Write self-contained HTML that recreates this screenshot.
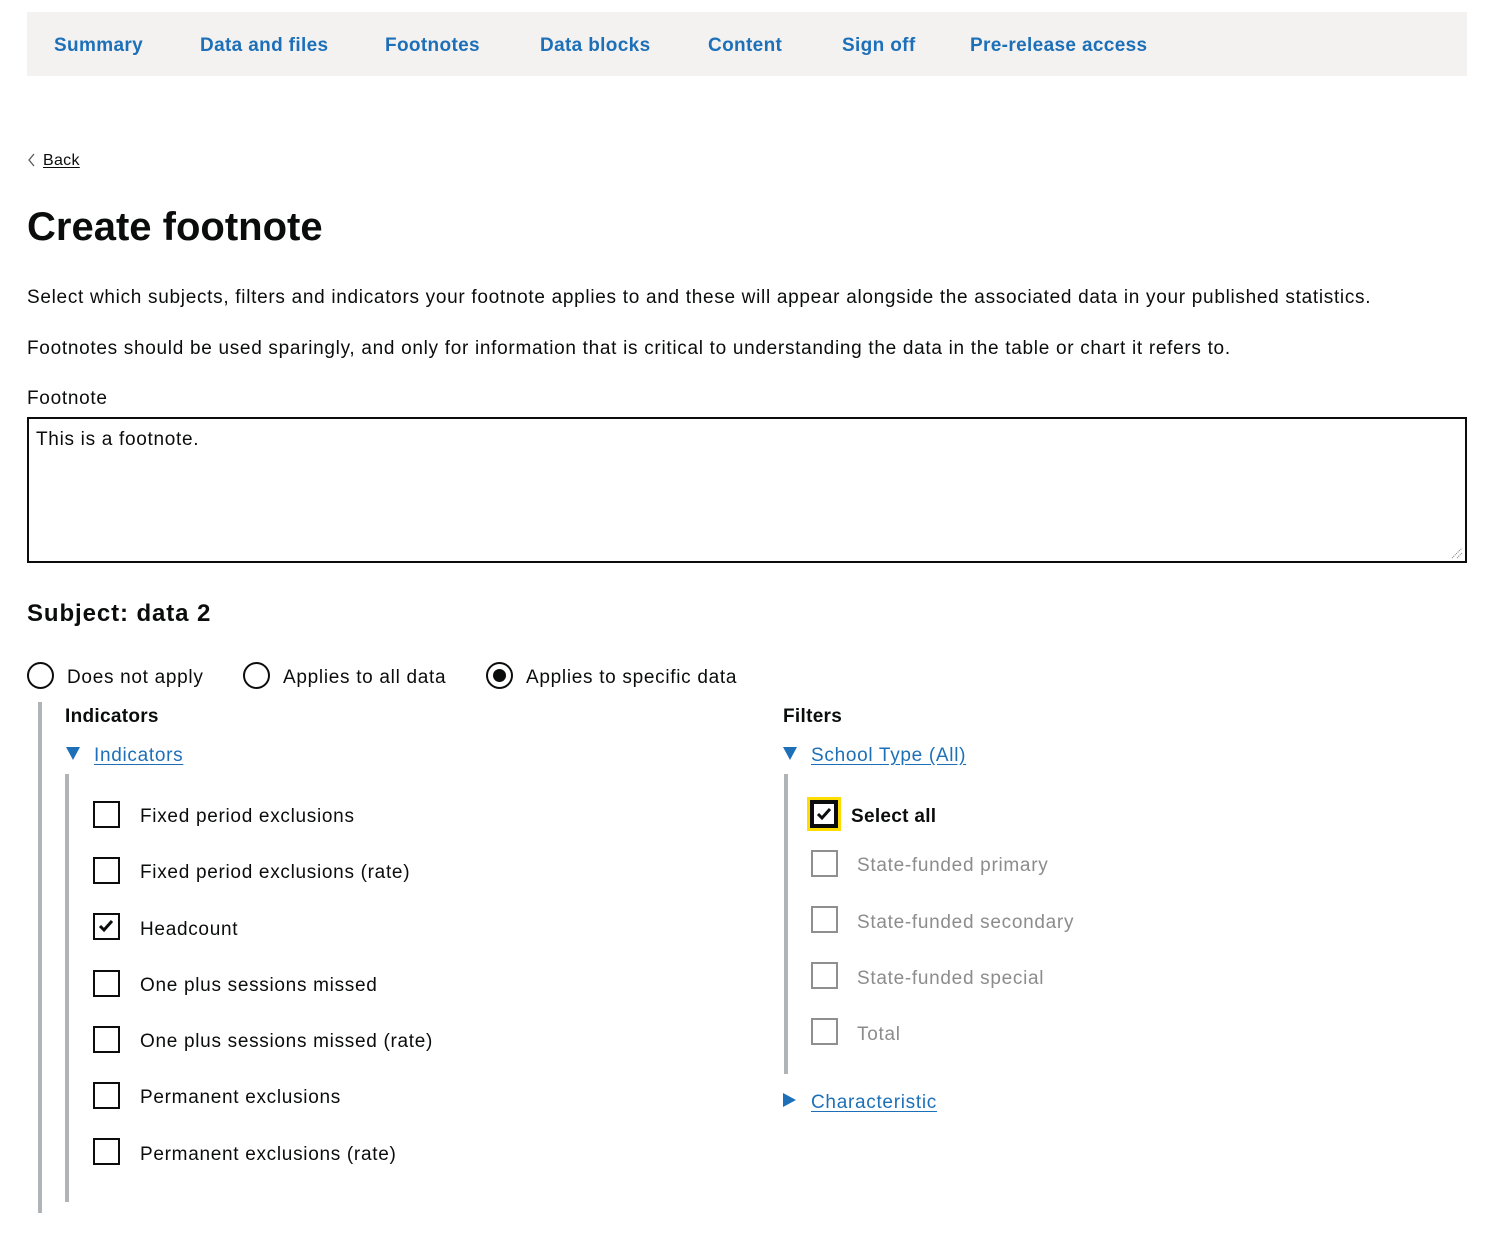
<!DOCTYPE html>
<html><head><meta charset="utf-8">
<style>
*{margin:0;padding:0;box-sizing:border-box}
body{width:1499px;height:1243px;background:#fff;font-family:"Liberation Sans",sans-serif;color:#0b0c0c;position:relative;overflow:hidden}
.a{position:absolute;white-space:nowrap}
.nav{position:absolute;left:27px;top:12px;width:1440px;height:64px;background:#f3f2f1}
.nl{position:absolute;top:32px;color:#1d70b8;font-weight:bold;font-size:19px;line-height:28px;letter-spacing:0.35px}
.t{font-size:19px;line-height:28px;letter-spacing:0.7px;transform:translateY(2px)}
.lnk{color:#1d70b8;text-decoration:underline;text-underline-offset:3px}
.rad{position:absolute;width:27px;height:27px;border:2px solid #0b0c0c;border-radius:50%}
.cb{position:absolute;width:27px;height:27px;border:2px solid #0b0c0c;background:#fff}
.cb.g{border-color:#8f8f8f}
.bar{position:absolute;background:#b1b4b6;width:4px}
.g2{color:#8c8c8c}
</style></head><body>
<div class="nav"></div>
<div class="nl" style="left:54px">Summary</div>
<div class="nl" style="left:200px">Data and files</div>
<div class="nl" style="left:385px">Footnotes</div>
<div class="nl" style="left:540px">Data blocks</div>
<div class="nl" style="left:708px">Content</div>
<div class="nl" style="left:842px">Sign off</div>
<div class="nl" style="left:970px">Pre-release access</div>

<svg class="a" style="left:27px;top:153px" width="10" height="14"><path d="M7 1 L2 7 L7 13" fill="none" stroke="#505a5f" stroke-width="1.3"/></svg>
<div class="a" style="left:43px;top:151px;font-size:16px;line-height:20px;letter-spacing:0.3px;text-decoration:underline;text-underline-offset:2px">Back</div>

<div class="a" style="left:27px;top:203px;font-size:40px;line-height:48px;font-weight:bold;letter-spacing:0px">Create footnote</div>

<div class="a t" style="left:27px;top:282px">Select which subjects, filters and indicators your footnote applies to and these will appear alongside the associated data in your published statistics.</div>
<div class="a t" style="left:27px;top:333px">Footnotes should be used sparingly, and only for information that is critical to understanding the data in the table or chart it refers to.</div>
<div class="a t" style="left:27px;top:383px">Footnote</div>
<div class="a" style="left:27px;top:417px;width:1440px;height:146px;border:2px solid #0b0c0c"></div>
<div class="a t" style="left:36px;top:424px">This is a footnote.</div>
<svg class="a" style="left:1450px;top:546px" width="14" height="14"><path d="M2 12 L12 2 M7 12 L12 7" stroke="#777" stroke-width="1" stroke-dasharray="1 1"/></svg>

<div class="a" style="left:27px;top:599px;font-size:24px;line-height:30px;font-weight:bold;letter-spacing:0.9px">Subject: data 2</div>

<div class="rad" style="left:27px;top:662px"></div>
<div class="a t" style="left:67px;top:662px">Does not apply</div>
<div class="rad" style="left:243px;top:662px"></div>
<div class="a t" style="left:283px;top:662px">Applies to all data</div>
<div class="rad" style="left:486px;top:662px"></div>
<div class="a" style="left:493px;top:669px;width:13px;height:13px;border-radius:50%;background:#0b0c0c"></div>
<div class="a t" style="left:526px;top:662px">Applies to specific data</div>

<div class="bar" style="left:38px;top:702px;height:511px"></div>
<div class="a t" style="left:65px;top:701px;font-weight:bold;letter-spacing:0.3px">Indicators</div>
<svg class="a" style="left:66px;top:747px" width="15" height="14"><path d="M0 0 H14 L7 13 Z" fill="#1d70b8"/></svg>
<div class="a t lnk" style="left:94px;top:740px">Indicators</div>
<div class="bar" style="left:65px;top:774px;height:428px"></div>

<div class="cb" style="left:93px;top:801px"></div><div class="a t" style="left:140px;top:801px">Fixed period exclusions</div>
<div class="cb" style="left:93px;top:857px"></div><div class="a t" style="left:140px;top:857px">Fixed period exclusions (rate)</div>
<div class="cb" style="left:93px;top:913px"></div>
<svg class="a" style="left:93px;top:913px" width="27" height="27"><path d="M7 13 L11 17 L19 8" fill="none" stroke="#0b0c0c" stroke-width="3"/></svg>
<div class="a t" style="left:140px;top:914px">Headcount</div>
<div class="cb" style="left:93px;top:970px"></div><div class="a t" style="left:140px;top:970px">One plus sessions missed</div>
<div class="cb" style="left:93px;top:1026px"></div><div class="a t" style="left:140px;top:1026px">One plus sessions missed (rate)</div>
<div class="cb" style="left:93px;top:1082px"></div><div class="a t" style="left:140px;top:1082px">Permanent exclusions</div>
<div class="cb" style="left:93px;top:1138px"></div><div class="a t" style="left:140px;top:1139px">Permanent exclusions (rate)</div>

<div class="a t" style="left:783px;top:701px;font-weight:bold;letter-spacing:0.3px">Filters</div>
<svg class="a" style="left:783px;top:747px" width="15" height="14"><path d="M0 0 H14 L7 13 Z" fill="#1d70b8"/></svg>
<div class="a t lnk" style="left:811px;top:740px">School Type (All)</div>
<div class="bar" style="left:784px;top:774px;height:300px"></div>

<div class="a" style="left:807px;top:797px;width:34px;height:34px;background:#fd0"></div>
<div class="a" style="left:810px;top:800px;width:28px;height:28px;border:4px solid #0b0c0c;background:#fff"></div>
<svg class="a" style="left:810px;top:800px" width="28" height="28"><path d="M8 14 L12 18 L20 9" fill="none" stroke="#0b0c0c" stroke-width="3"/></svg>
<div class="a t" style="left:851px;top:801px;font-weight:bold;letter-spacing:0.3px">Select all</div>

<div class="cb g" style="left:811px;top:850px"></div><div class="a t g2" style="left:857px;top:850px">State-funded primary</div>
<div class="cb g" style="left:811px;top:906px"></div><div class="a t g2" style="left:857px;top:907px">State-funded secondary</div>
<div class="cb g" style="left:811px;top:962px"></div><div class="a t g2" style="left:857px;top:963px">State-funded special</div>
<div class="cb g" style="left:811px;top:1018px"></div><div class="a t g2" style="left:857px;top:1019px">Total</div>

<svg class="a" style="left:783px;top:1093px" width="14" height="15"><path d="M0 0 V14 L13 7 Z" fill="#1d70b8"/></svg>
<div class="a t lnk" style="left:811px;top:1087px">Characteristic</div>
</body></html>
